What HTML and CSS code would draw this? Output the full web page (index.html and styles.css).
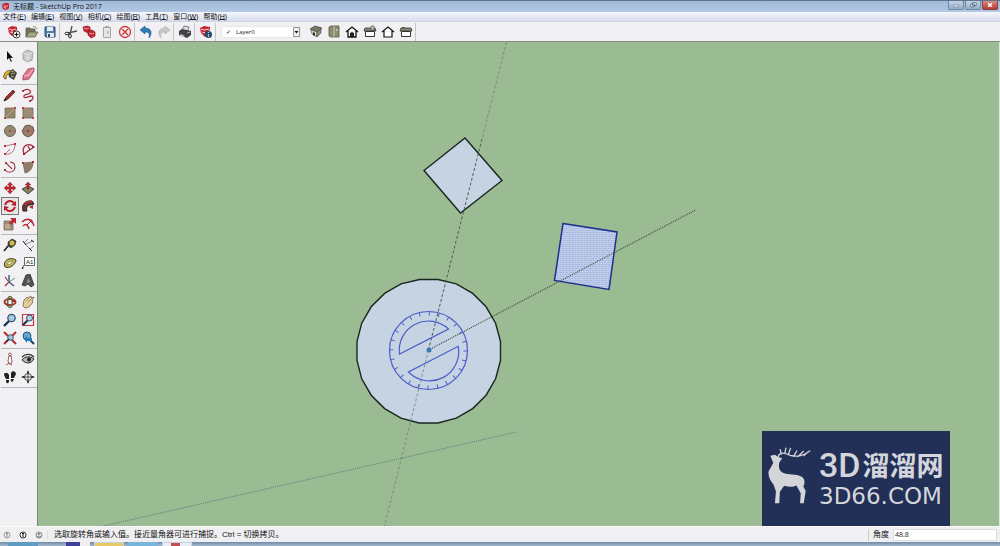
FILE: index.html
```html
<!DOCTYPE html>
<html lang="zh-CN">
<head>
<meta charset="utf-8">
<title>无标题 - SketchUp Pro 2017</title>
<link rel="stylesheet" href="styles.css">
</head>
<body>
<header class="titlebar">
  <svg class="app-icon" viewBox="0 0 8 8"><path d="M0 2 3 0h4l1 1v5L5 8 1 7z" fill="#c9202b"/><path d="M2 3l3 1 2-1M2 5l3 1" stroke="#fff" stroke-width=".8" fill="none"/></svg>
  <h1 class="title">无标题 - SketchUp Pro 2017</h1>
  <div class="window-buttons">
    <button class="win" aria-label="最小化"><svg viewBox="0 0 15 8"><path d="M5 4h5v2H5z" fill="#fff" stroke="#596b83" stroke-width=".6"/></svg></button>
    <button class="win" aria-label="还原"><svg viewBox="0 0 15 8"><path d="M7 1.500h4v3H7zM5 3h4v3H5z" fill="#e9eff7" stroke="#4d607a" stroke-width=".8"/></svg></button>
    <button class="win close" aria-label="关闭"><svg viewBox="0 0 15 8"><path d="M5.500 2l4 4m0-4-4 4" stroke="#fff" stroke-width="1.500"/></svg></button>
  </div>
</header>
<nav class="menubar">
  <button>文件(<u>F</u>)</button><button>编辑(<u>E</u>)</button><button>视图(<u>V</u>)</button><button>相机(<u>C</u>)</button><button>绘图(<u>R</u>)</button><button>工具(<u>T</u>)</button><button>窗口(<u>W</u>)</button><button>帮助(<u>H</u>)</button>
</nav>
<div class="toolbar">
  <div class="group">
    <button class="tool" aria-label="新建"><svg viewBox="0 0 14 14"><path d="M1 3l4-2 5 1v3l-2 1v4l-3 1-3-3z" fill="#c4232d"/><path d="M2 4l3 1 4-1M3 7l3 1M5 5v3" stroke="#fff" stroke-width=".7" fill="none"/><circle cx="9.500" cy="9.500" r="3.500" fill="#fff" stroke="#333"/><path d="M7.500 9.500h4m-2-2v4" stroke="#111" stroke-width="1.200"/></svg></button>
    <button class="tool" aria-label="打开"><svg viewBox="0 0 14 14"><path d="M1 12V3h4l1 1h4v3" fill="#77735a" stroke="#5b5a4c" stroke-width=".8"/><path d="M1 12l3-5h9l-3 5z" fill="#a8a783" stroke="#5d5c4b" stroke-width=".8"/><path d="M8 2c2-1 3 0 4 2" stroke="#729049" fill="none"/></svg></button>
    <button class="tool" aria-label="保存"><svg viewBox="0 0 14 14"><path d="M2 2h10v10H3l-1-1z" fill="#4f81ac" stroke="#2b4f74"/><path d="M4 2h6v4H4zM4 8h7v4H4z" fill="#e5eaf0"/><path d="M5 9h2v3H5z" fill="#2b4f74"/></svg></button>
  </div>
  <div class="group">
    <button class="tool" aria-label="剪切"><svg viewBox="0 0 14 14"><path d="M8 1 6 9M13 6 4 8" stroke="#555" stroke-width="1.400"/><ellipse cx="3" cy="8.500" rx="2" ry="1.300" fill="none" stroke="#222"/><ellipse cx="6" cy="11" rx="1.300" ry="2" fill="none" stroke="#222"/></svg></button>
    <button class="tool" aria-label="复制"><svg viewBox="0 0 14 14"><path d="M1 2l4-1 3 1v3l-2 3-4-2zM6 6l4-1 3 2v4l-4 2-3-3z" fill="#c62631" stroke="#8f1720" stroke-width=".7"/><path d="M2 3l3 1 2-1M7 8l3 1 2-1" stroke="#f4c9cb" stroke-width=".7" fill="none"/></svg></button>
    <button class="tool" aria-label="粘贴"><svg viewBox="0 0 14 14"><path d="M3.500 2.500h7v10h-7z" fill="#e6e6e6" stroke="#a5a5a5"/><path d="M5 1h4v2H5z" fill="#aaa"/><path d="M7 6h2v3H7z" fill="#bbb"/></svg></button>
    <button class="tool" aria-label="删除"><svg viewBox="0 0 14 14"><circle cx="7" cy="7" r="5.500" fill="#f8eeee" stroke="#cb3431" stroke-width="1.300"/><path d="M4 4l6 6m0-6-6 6" stroke="#cb3431" stroke-width="1.300"/></svg></button>
  </div>
  <div class="group">
    <button class="tool" aria-label="撤销"><svg viewBox="0 0 14 14"><path d="M1 5l5-4v2c6 0 8 5 4 10 1-4 0-6-4-6v2z" fill="#2c7db7" stroke="#185583" stroke-width=".6"/></svg></button>
    <button class="tool" aria-label="重做"><svg viewBox="0 0 14 14"><path d="M13 5 8 1v2C2 3 0 8 4 13 3 9 4 7 8 7v2z" fill="#c6c8ca" stroke="#aaa" stroke-width=".6"/></svg></button>
  </div>
  <div class="group">
    <button class="tool" aria-label="打印"><svg viewBox="0 0 14 14"><path d="M4 5l2-4 5 1-1 4" fill="#ddd" stroke="#555" stroke-width=".7"/><path d="M1 6l3-2 9 2v4l-4 3-8-3z" fill="#3e4146"/><path d="M3 9l4 2-2 1-3-2z" fill="#ccc"/><path d="M9 8l3-1" stroke="#aaa"/></svg></button>
  </div>
  <div class="group">
    <button class="tool" aria-label="模型信息"><svg viewBox="0 0 14 14"><path d="M1 3l4-2 6 1v3l-2 1v4l-3 2-4-4z" fill="#c4232d"/><path d="M2 4l3 1 5-1M3 7l3 1" stroke="#fff" stroke-width=".8" fill="none"/><circle cx="9.500" cy="9.500" r="3.500" fill="#204873"/><path d="M9.500 7v1m0 1v3" stroke="#a9bfd6" stroke-width="1.200"/></svg></button>
  </div>
  <div class="layer-box">
    <label for="layer">✓</label>
    <select id="layer" aria-label="图层"><option>Layer0</option></select>
    <svg class="arrow" viewBox="0 0 7 10"><path d="M.5.5h6v9h-6z" fill="#eee" stroke="#999"/><path d="M1.500 4h4L3.500 6.500z" fill="#111"/></svg>
  </div>
  <div class="group views">
    <button class="tool" aria-label="等轴"><svg viewBox="0 0 14 14"><path d="M1 4l5-3 7 2-4 4z" fill="#777864" stroke="#3f4038" stroke-width=".7"/><path d="M2 5l6 2v5l-5-3z" fill="#d9d9c8" stroke="#444" stroke-width=".6"/><path d="M8 7l4-3v4l-4 4z" fill="#8e8e77" stroke="#444" stroke-width=".6"/><path d="M4 7l2 1v3l-2-1z" fill="#333"/></svg></button>
    <button class="tool" aria-label="俯视图"><svg viewBox="0 0 14 14"><path d="M2 2l2-1h8v11H4l-2-1z" fill="#8d8b70" stroke="#555443" stroke-width=".8"/><path d="M7 1v11" stroke="#c9c7ad"/><path d="M9 4h2v2H9z" fill="#bbb99f"/></svg></button>
    <button class="tool" aria-label="前视图"><svg viewBox="0 0 14 14"><path d="M1 7l6-5 6 5M3 6v6h8V6" fill="#f8f8f8" stroke="#111" stroke-width="1.300"/><path d="M5 12V8l2-1 2 1v4z" fill="#222"/></svg></button>
    <button class="tool" aria-label="右视图"><svg viewBox="0 0 14 14"><path d="M2 3h10l1 3H1z" fill="#8a8871" stroke="#333" stroke-width=".8"/><path d="M2.500 6.500h9v5h-9z" fill="#fff" stroke="#333"/><path d="M8 1h3v4H8z" fill="#c8c6b4" stroke="#444" stroke-width=".6"/></svg></button>
    <button class="tool" aria-label="后视图"><svg viewBox="0 0 14 14"><path d="M1 7l6-5 6 5M3 6v6h8V6" fill="#fff" stroke="#111" stroke-width="1.200"/></svg></button>
    <button class="tool" aria-label="左视图"><svg viewBox="0 0 14 14"><path d="M2 3h10l1 3H1z" fill="#8a8871" stroke="#333" stroke-width=".8"/><path d="M2.500 6.500h9v5h-9z" fill="#fff" stroke="#333"/><path d="M3 2h3v1H3z" fill="#555"/></svg></button>
  </div>
</div>
<main class="workspace">
  <aside class="sidebar">
    <div class="pair">
      <button class="tool" aria-label="选择"><svg viewBox="0 0 14 14"><path d="M4 2v9l2-2 2 4 1-1-2-3h3z" fill="#111"/></svg></button>
      <button class="tool" aria-label="制作组件"><svg viewBox="0 0 14 14"><path d="M2 4l4-3 6 2-1 8-5 2-4-3z" fill="#c9cacb" stroke="#909294" stroke-width=".8"/><path d="M2 4l5 2 5-3M7 6l-1 7M4 8l5 1" fill="none" stroke="#eee" stroke-width=".7"/></svg></button>
      <button class="tool" aria-label="材质"><svg viewBox="0 0 14 14"><path d="M5 5l5-3 4 4-3 7-5-3z" fill="#424537"/><path d="M7 5l4-1M8 7l4-1M8 9l3 1" stroke="#b4ae75"/><path d="M1 8c2-5 5-5 7-4L6 7c-2 0-3 2-3 5-2 0-3-2-2-4z" fill="#e3b51f" stroke="#333" stroke-width=".7"/></svg></button>
      <button class="tool" aria-label="擦除"><svg viewBox="0 0 14 14"><path d="M2 9l5-7 6-1v3l-5 8-6 1z" fill="#df7a8d" stroke="#9b4052" stroke-width=".8"/><path d="M3 9l5-1 4-6" stroke="#f7bec7" fill="none"/></svg></button>
    </div>
    <div class="pair">
      <button class="tool" aria-label="直线"><svg viewBox="0 0 14 14"><path d="M1 13l2-4 7-7 2 2-7 7z" fill="#a42d27" stroke="#53251f" stroke-width=".8"/><path d="M1 13l3-1-2-2z" fill="#222"/></svg></button>
      <button class="tool" aria-label="手绘线"><svg viewBox="0 0 14 14"><path d="M2 3c4-3 9-1 7 2-2 2-7 1-6 4 1 2 5-1 8-1 2 1 1 4-2 5" fill="none" stroke="#a62a3c" stroke-width="1.300"/><circle cx="2" cy="3" r="1" fill="#7c2430"/><circle cx="9" cy="13" r="1" fill="#7c2430"/></svg></button>
      <button class="tool" aria-label="矩形"><svg viewBox="0 0 14 14"><path d="M2 2h10v10H2z" fill="#94876e" stroke="#766d59" stroke-width=".8"/><path d="M2 12 12 2" stroke="#d0b39c" stroke-width=".8"/><path d="M1 11h2v2H1zM11 1h2v2h-2z" fill="#c34142"/></svg></button>
      <button class="tool" aria-label="旋转矩形"><svg viewBox="0 0 14 14"><path d="M2 2h10v10H2z" fill="#9b8a75" stroke="#736653" stroke-width=".8"/><path d="M2 2c5 0 9 3 10 10" fill="none" stroke="#c58f82" stroke-width=".7"/><path d="M1 1h2v2H1zm10 10h2v2h-2zM1 11h2v2H1z" fill="#c34142"/></svg></button>
      <button class="tool" aria-label="圆"><svg viewBox="0 0 14 14"><circle cx="7" cy="7" r="5.500" fill="#958a72" stroke="#6b6554"/><path d="M7 7h5" stroke="#ba6056" stroke-width=".8"/><circle cx="7" cy="7" r="1" fill="#a33"/></svg></button>
      <button class="tool" aria-label="多边形"><svg viewBox="0 0 14 14"><path d="M4 2l4-1 4 2 1 4-2 4-4 2-4-2-2-4z" fill="#967d6c" stroke="#70483f" stroke-width=".9"/><path d="M7 7l5-1" stroke="#b75a50" stroke-width=".8"/><path d="M6 6h2v2H6z" fill="#a33"/></svg></button>
      <button class="tool" aria-label="圆弧"><svg viewBox="0 0 14 14"><path d="M2 12C8 13 12 9 12 2L2 4M2 12l5-5" fill="none" stroke="#b16570" stroke-width=".9"/><path d="M1 11h2v2H1zM11 1h2v2h-2zM1 3h2v2H1z" fill="#c23038"/></svg></button>
      <button class="tool" aria-label="两点圆弧"><svg viewBox="0 0 14 14"><path d="M3 12C0 4 7 0 13 5L3 12M7 4l2 4" fill="none" stroke="#a52734" stroke-width="1.200"/><path d="M2 11h2v2H2zm9-7h2v2h-2z" fill="#982631"/></svg></button>
      <button class="tool" aria-label="三点圆弧"><svg viewBox="0 0 14 14"><path d="M3 3l6 6M7 2c5 0 6 5 4 8s-7 3-9 0" fill="none" stroke="#9d3c48" stroke-width="1.100"/><path d="M1 9h2v2H1zm1-7h2v2H2z" fill="#b9323b"/></svg></button>
      <button class="tool" aria-label="扇形"><svg viewBox="0 0 14 14"><path d="M2 3l10-1c0 6-3 10-8 11z" fill="#907d69" stroke="#806654" stroke-width=".8"/><path d="M1 2h2v2H1zM11 1h2v2h-2z" fill="#af3032"/></svg></button>
    </div>
    <div class="pair">
      <button class="tool" aria-label="移动"><svg viewBox="0 0 14 14"><path d="M7 1l2.500 3H8v2h2V4.500L13 7l-3 2.500V8H8v2h1.500L7 13l-2.500-3H6V8H4v1.500L1 7l3-2.500V6h2V4H4.500z" fill="#c5252e" stroke="#7d161a" stroke-width=".4"/></svg></button>
      <button class="tool" aria-label="推拉"><svg viewBox="0 0 14 14"><path d="M1 8l6-3 6 3-6 5z" fill="#858164" stroke="#4b493b"/><path d="M7 1l3 3H8v4H6V4H4z" fill="#bf2730" stroke="#701c20" stroke-width=".4"/></svg></button>
      <button class="tool active" aria-label="旋转" aria-pressed="true"><svg viewBox="0 0 14 14"><path d="M2 6c2-5 7-5 9-2M12 8c-2 5-7 5-9 2" fill="none" stroke="#bd1e2a" stroke-width="2"/><path d="M13 2v5L8 6zM1 12V7l5 1z" fill="#bd1e2a"/></svg></button>
      <button class="tool" aria-label="路径跟随"><svg viewBox="0 0 14 14"><path d="M2 12C0 5 5 1 11 2l2 3-4 1c-3 0-4 3-3 6z" fill="#67342e" stroke="#2e2320"/><path d="M4 6c1-3 4-4 7-3" stroke="#c63738" stroke-width="1.500" fill="none"/><path d="M8 8l4-2v4z" fill="#b7252c"/></svg></button>
      <button class="tool" aria-label="缩放"><svg viewBox="0 0 14 14"><path d="M1 4h9v9H1z" fill="#9d8b76" stroke="#7b7062" stroke-width=".8"/><path d="M2 7h5v5H2z" fill="#b9a993"/><path d="M7 1h6v6l-2-2-3 3-2-2 3-3z" fill="#bf252c"/></svg></button>
      <button class="tool" aria-label="偏移"><svg viewBox="0 0 14 14"><path d="M1 5c5-5 10-3 12 4M2 9c3-3 5-1 6 3" fill="none" stroke="#b72834" stroke-width="1.500"/><path d="M6 8l5-5M8 3h3v3z" stroke="#c12832" fill="#c12832"/></svg></button>
    </div>
    <div class="pair">
      <button class="tool" aria-label="卷尺"><svg viewBox="0 0 14 14"><path d="M1 13l4-5" stroke="#222" stroke-width="1.600"/><path d="M5 4l4-3 4 2-1 4-4 3-3-2z" fill="#454639" stroke="#222" stroke-width=".6"/><circle cx="9" cy="5" r="2.500" fill="#ccb947"/></svg></button>
      <button class="tool" aria-label="尺寸"><svg viewBox="0 0 14 14"><path d="M3 5l7 7M4 4l3-3M5 6l7-3M9 11l4-3" stroke="#667080" stroke-width=".8"/><path d="M2 3l3 4M10 2l3 2M8 10l3 3" stroke="#222"/></svg></button>
      <button class="tool" aria-label="量角器"><svg viewBox="0 0 14 14"><path d="M2 11C-1 5 7 0 13 4c0 4-6 9-11 7z" fill="#c3bb50" stroke="#3e3d22"/><path d="M4 9c0-3 3-4 6-4-1 2-3 4-6 4z" fill="#f2efd1" stroke="#555" stroke-width=".6"/></svg></button>
      <button class="tool" aria-label="文字"><svg viewBox="0 0 14 14"><path d="M3.500 1.500h10v8h-10zM3 9l-2 4" fill="#fff" stroke="#666"/><path d="M1 13l2-1-2-1z" fill="#111"/><text class="glyph-label" x="5" y="8">A1</text></svg></button>
      <button class="tool" aria-label="轴"><svg viewBox="0 0 14 14"><path d="M6 8V1M6 8l5 4" stroke="#365883" stroke-width="1.400"/><path d="M6 8l6-4" stroke="#4d7c46" stroke-width=".8"/><path d="M6 8l-4 4M2 3l3 4" stroke="#a62c34" stroke-width="1.100"/></svg></button>
      <button class="tool" aria-label="三维文字"><svg viewBox="0 0 14 14"><path d="M5 1l4-1 4 11-3 2-3-3-3 2-3-1z" fill="#535353" stroke="#222" stroke-width=".7"/><path d="M7 4l2 4-3 1z" fill="#999"/></svg></button>
    </div>
    <div class="pair">
      <button class="tool" aria-label="环绕观察"><svg viewBox="0 0 14 14"><ellipse cx="7" cy="7" rx="5.500" ry="3" fill="none" stroke="#ad3331" stroke-width="2"/><ellipse cx="7" cy="7" rx="2.300" ry="5.500" fill="none" stroke="#4f7249" stroke-width="1.500"/><path d="M2 8l3 1v3zM10 4l3 3h-4z" fill="#a5232b"/></svg></button>
      <button class="tool" aria-label="平移"><svg viewBox="0 0 14 14"><path d="M2 11l1-6 3-3 1 1 3-2v2l3-1-2 4 1 1-4 5-4 1z" fill="#e6cda0" stroke="#73644d" stroke-width=".8"/><path d="M5 6l3-3M7 7l4-4" stroke="#937b57" stroke-width=".7"/></svg></button>
      <button class="tool" aria-label="视图缩放"><svg viewBox="0 0 14 14"><path d="M1 13l5-5" stroke="#173451" stroke-width="2.400"/><circle cx="8.500" cy="5" r="3.700" fill="#a7c9e3" stroke="#30516f" stroke-width="1.200"/></svg></button>
      <button class="tool" aria-label="缩放窗口"><svg viewBox="0 0 14 14"><path d="M1.500 1.500h11v11h-11z" fill="none" stroke="#c03c45" stroke-width="1.200"/><path d="M2 12l5-5" stroke="#193856" stroke-width="2.200"/><circle cx="8.500" cy="5" r="3" fill="#b9d1e5" stroke="#30516f"/></svg></button>
      <button class="tool" aria-label="充满视窗"><svg viewBox="0 0 14 14"><path d="M1 1l4 4M13 1 9 5M1 13l4-4M13 13 9 9" stroke="#b72c34" stroke-width="2"/><circle cx="7.500" cy="6.500" r="2.800" fill="#a5c5dc" stroke="#37536d"/><path d="M3 11l3-3" stroke="#203b53" stroke-width="1.500"/></svg></button>
      <button class="tool" aria-label="上一个"><svg viewBox="0 0 14 14"><path d="M7 7l6 6" stroke="#1d405f" stroke-width="2"/><circle cx="6" cy="5" r="4" fill="#65a5d0" stroke="#265a83"/><path d="M3 8l3-3v2h5v3H6v2z" fill="#287bb4"/></svg></button>
    </div>
    <div class="pair">
      <button class="tool" aria-label="定位相机"><svg viewBox="0 0 14 14"><circle cx="7" cy="2.500" r="1.400" fill="#fff" stroke="#8d4442" stroke-width=".9"/><path d="M6 4h2l1 5-1 3H6L5 9zM3 13l3-2 3 2" fill="#fff" stroke="#944945" stroke-width=".9"/></svg></button>
      <button class="tool" aria-label="绕轴旋转"><svg viewBox="0 0 14 14"><path d="M1 5c4-4 9-3 12 0" fill="none" stroke="#333" stroke-width="1.400"/><path d="M1 8c3-4 8-4 12-1-3 5-8 5-12 1z" fill="#bbb" stroke="#222"/><circle cx="8" cy="7.500" r="2" fill="#222"/></svg></button>
      <button class="tool" aria-label="漫游"><svg viewBox="0 0 14 14"><path d="M1 5c0-3 4-3 5 0v4H3zM3 10h3v1c0 3-3 3-3 0zM8 3c1-3 5-2 5 1l-2 4H8zM8 9h3l-1 2c-1 2-3 0-2-2z" fill="#222"/></svg></button>
      <button class="tool" aria-label="剖切面"><svg viewBox="0 0 14 14"><circle cx="7" cy="7" r="3.500" fill="#fff" stroke="#222" stroke-width=".9"/><path d="M7 1v12M1 7h12" stroke="#222" stroke-width=".8"/><path d="M7 0l1 3H6zM7 14l1-3H6zM0 7l3-1v2zM14 7l-3-1v2z" fill="#222"/></svg></button>
    </div>
  </aside>
  <section class="viewport">
    <svg class="scene" viewBox="38 42 962 484" preserveAspectRatio="xMidYMid slice">
      <defs><pattern id="dots" width="3" height="4" patternUnits="userSpaceOnUse"><path d="M0 0h1v1H0zM2 2h1v1H2z" fill="#8c9cd0"/></pattern></defs>
      <g fill="#c5d3e2" stroke="#1b2520" stroke-width="1.400">
        <path d="M465.500 138 502.500 180.500 461 213 424.500 170.500z"/>
        <path d="M501 341.500 496.100 323.200 486.600 306.800 473.200 293.400 456.800 283.900 438.500 279.500H420L401.500 283.900 385.100 293.400 371.700 306.800 362.200 323.200 357.500 341.500V360.500L362.200 378.800 371.700 395.200 385.100 408.600 401.500 418.100 419.500 423H438.500L456.800 418.100 473.200 408.600 486.600 395.200 496.100 378.800 501 360.500z"/>
      </g>
      <path d="M563.500 223.500 617.500 232 609.500 289.500 555 280.500z" fill="#c0cdea"/>
      <path d="M563.500 223.500 617.500 232 609.500 289.500 555 280.500z" fill="url(#dots)" stroke="#1d308f" stroke-width="1.500"/>
      <path d="M507 42 482.500 139M429 350 385 526" stroke="#718174" stroke-width=".8" stroke-dasharray="3 2"/>
      <path d="M482.500 139 429 350" stroke="#4f5c57" stroke-dasharray="3 2"/>
      <path d="M429 350 696 210" stroke="#36483d" stroke-width="1.100" stroke-dasharray="1 1"/>
      <path d="M104 526 517 432" stroke="#557b84" stroke-dasharray="1 1"/>
      <g fill="none" stroke="#4c5cc8" stroke-width="1.200">
        <circle cx="429" cy="350.500" r="39"/>
        <circle cx="429" cy="350.500" r="37" stroke-width="4" stroke-dasharray="1 8.687"/>
        <path d="M400 354A29.200 29.200 0 0 1 449 329zM458.700 346.300A29.200 29.200 0 0 1 409 372z"/>
      </g>
      <circle cx="429.500" cy="350" r="2.500" fill="#3978b8"/>
    </svg>
    <div class="brand">
      <svg class="deer" viewBox="40 70 130 172"><path d="M47 96l14-3 10 7 12 4-8 11c-5 14-1 27 10 33 16 7 43 2 59 13 9 7 7 20 3 28l7 14-6 37h-11l2-30-13-24c-12 6-26 4-37 1l-13 18-2 35H61l3-36-7-20c-10-13-18-27-15-41l14-25z" fill="#d4d5d8"/><path d="M71 99c2-12 15-12 26-8 18 10 45 10 69-9M80 91l-3-13M91 89l3-16M101 93l7-19M117 98l10-16M130 99l17-16M149 96l10-10" fill="none" stroke="#d4d5d8" stroke-width="4" stroke-linecap="round"/></svg>
      <div class="brand-text"><div class="brand-name"><span>3D</span><b>溜溜网</b></div><div class="brand-url">3D66.COM</div></div>
    </div>
  </section>
</main>
<footer class="status">
  <div class="status-icons">
    <svg viewBox="0 0 8 8"><circle cx="4" cy="4" r="3" fill="#eee" stroke="#999"/><path d="M4 2v4M3 3l1-1 1 1" stroke="#888" fill="none"/></svg>
    <svg viewBox="0 0 8 8"><circle cx="4" cy="4" r="3" fill="#fff" stroke="#333"/><path d="M4 2v4M3 3l1-1 1 1" stroke="#111" fill="none"/></svg>
    <svg viewBox="0 0 8 8"><circle cx="4" cy="4" r="3" fill="#ddd" stroke="#888"/><circle cx="4" cy="3" r="1" fill="#777"/><path d="M2 6h4" stroke="#777"/></svg>
  </div>
  <p class="hint">选取旋转角或输入值。接近量角器可进行捕捉。Ctrl = 切换拷贝。</p>
  <label class="angle-label" for="angle">角度</label>
  <input id="angle" class="angle" value="48.8">
</footer>
<div class="taskbar"><i class="task orb"></i><i class="task mixed"></i><i class="task yellow"></i><i class="task blue"></i><i class="task red"></i></div>
</body>
</html>
```
FILE: styles.css
```css
* { box-sizing: border-box; }
body {
  margin: 0;
  height: 100vh;
  display: flex;
  flex-direction: column;
  overflow: hidden;
  background: #f0eff1;
  color: #111;
  font: 7px/10px "Liberation Sans", "Noto Sans CJK SC", sans-serif;
}
button { margin: 0; padding: 0; border: 0; background: none; color: inherit; font: inherit; }
svg { display: block; }

.titlebar {
  flex: 0 0 12px;
  display: flex;
  align-items: center;
  padding: 0 2px;
  border-top: 1px solid #5f7389;
  background: linear-gradient(#9fb9d8, #b3c9e5);
}
.app-icon { width: 7px; height: 7px; }
.title { margin: 0 auto 0 4px; font: 400 7px/10px "Open Sans", "Noto Sans CJK SC", sans-serif; }
.window-buttons { display: flex; gap: 1px; align-self: flex-start; }
.win { width: 16px; height: 9px; border: 1px solid #7186a0; border-top: 0; border-radius: 0 0 2px 2px; background: linear-gradient(#c5d5e8, #94aeca); }
.win svg { width: 100%; height: 8px; }
.win.close { border-color: #83413f; background: linear-gradient(#d98d84, #b83a30); }

.menubar {
  flex: 0 0 10px;
  display: flex;
  gap: 5px;
  padding-left: 3px;
  border-bottom: 1px solid #cfd4e2;
  background: linear-gradient(#f5f7fb, #d8deef);
}
.menubar button { line-height: 9px; white-space: nowrap; }
.menubar u { text-underline-offset: 0; }

.toolbar {
  flex: 0 0 20px;
  display: flex;
  align-items: center;
  gap: 3px;
  padding-left: 5px;
  border-bottom: 1px solid #868e86;
  background: #f1f0f2;
}
.group { display: flex; }
.toolbar .group { border-right: 1px solid #c7c7c9; margin-right: -1px; }
.tool { width: 18px; height: 18px; padding: 2px; border: 0; }
.tool svg { width: 14px; height: 14px; }
.tool.active { padding: 1px; border: 1px solid #777; background: #e5e5e7; }
.layer-box {
  position: relative;
  display: flex;
  align-items: center;
  width: 80px;
  height: 12px;
  margin: 0 3px;
  background: #fff;
  border: 1px solid #e7e7e9;
}
.layer-box label { width: 14px; padding-left: 4px; font: 6px/8px "DejaVu Sans", sans-serif; }
.layer-box select { appearance: none; flex: 1; min-width: 0; border: 0; padding: 0; background: none; color: #222; font: 6px/10px "Open Sans", sans-serif; }
.arrow { position: absolute; right: 0; top: 0; width: 7px; height: 10px; pointer-events: none; }

.workspace { flex: 1; min-height: 0; display: flex; }
.sidebar { flex: 0 0 38px; padding: 5px 0 0 1px; border-right: 1px solid #7d867d; background: #f1f0f2; }
.pair { display: grid; grid-template-columns: 18px 18px; padding-bottom: 1px; margin-bottom: 1px; border-bottom: 1px solid #b9b9bc; }
.glyph-label { font: 6px "Liberation Sans", sans-serif; fill: #222; }
.viewport { position: relative; flex: 1; min-width: 0; background: #9bbb92; border-right: 1px solid #dfe5df; }
.scene { width: 100%; height: 100%; }
.brand {
  position: absolute;
  right: 49px;
  bottom: 0;
  display: flex;
  gap: 8px;
  padding: 16px 5px 17px 6px;
  background: #222f57;
  color: #d4d6dc;
}
.deer { flex: 0 0 43px; height: 57px; }
.brand-text { width: 126px; white-space: nowrap; }
.brand-name { display: flex; gap: 2px; align-items: center; height: 36px; }
.brand-name span { font: 500 34px/36px Roboto, sans-serif; }
.brand-name b { font: 700 27px/36px "Noto Sans CJK SC", sans-serif; }
.brand-url { font: 23px/26px "DejaVu Sans", sans-serif; }

.status { flex: 0 0 16px; display: flex; align-items: center; padding-left: 3px; border-top: 1px solid #fafafa; font-size: 8px; line-height: 12px; }
.status-icons { display: flex; gap: 8px; padding-right: 4px; margin-right: 6px; border-right: 1px solid #ddd; }
.status-icons svg { width: 8px; height: 8px; }
.hint { margin: 0 auto 0 0; }
.angle-label { padding: 0 4px; border-left: 1px solid #ccc; }
.angle { width: 104px; height: 12px; margin-right: 3px; padding: 0 1px; border: 1px solid #ddd; background: #fff; color: #222; font: 7px/10px "Open Sans", sans-serif; }
.taskbar { flex: 0 0 4px; display: flex; gap: 4px; padding-left: 8px; background: linear-gradient(#7189a5, #a5bad3); }
.task { width: 30px; border: 1px solid #c5d2df; border-bottom: 0; }
.task.orb { background: #5e9cc3; border: 0; }
.task.mixed { margin-left: 24px; width: 24px; border: 0; background: linear-gradient(90deg, #3e3f9a 60%, #eee 60%); }
.task.yellow { background: #e7c967; }
.task.blue { border: 0; background: #79b5dd; }
.task.red { background: linear-gradient(90deg, #e7edf3 30%, #c24d53 30% 60%, #e7edf3 60%); }
```
